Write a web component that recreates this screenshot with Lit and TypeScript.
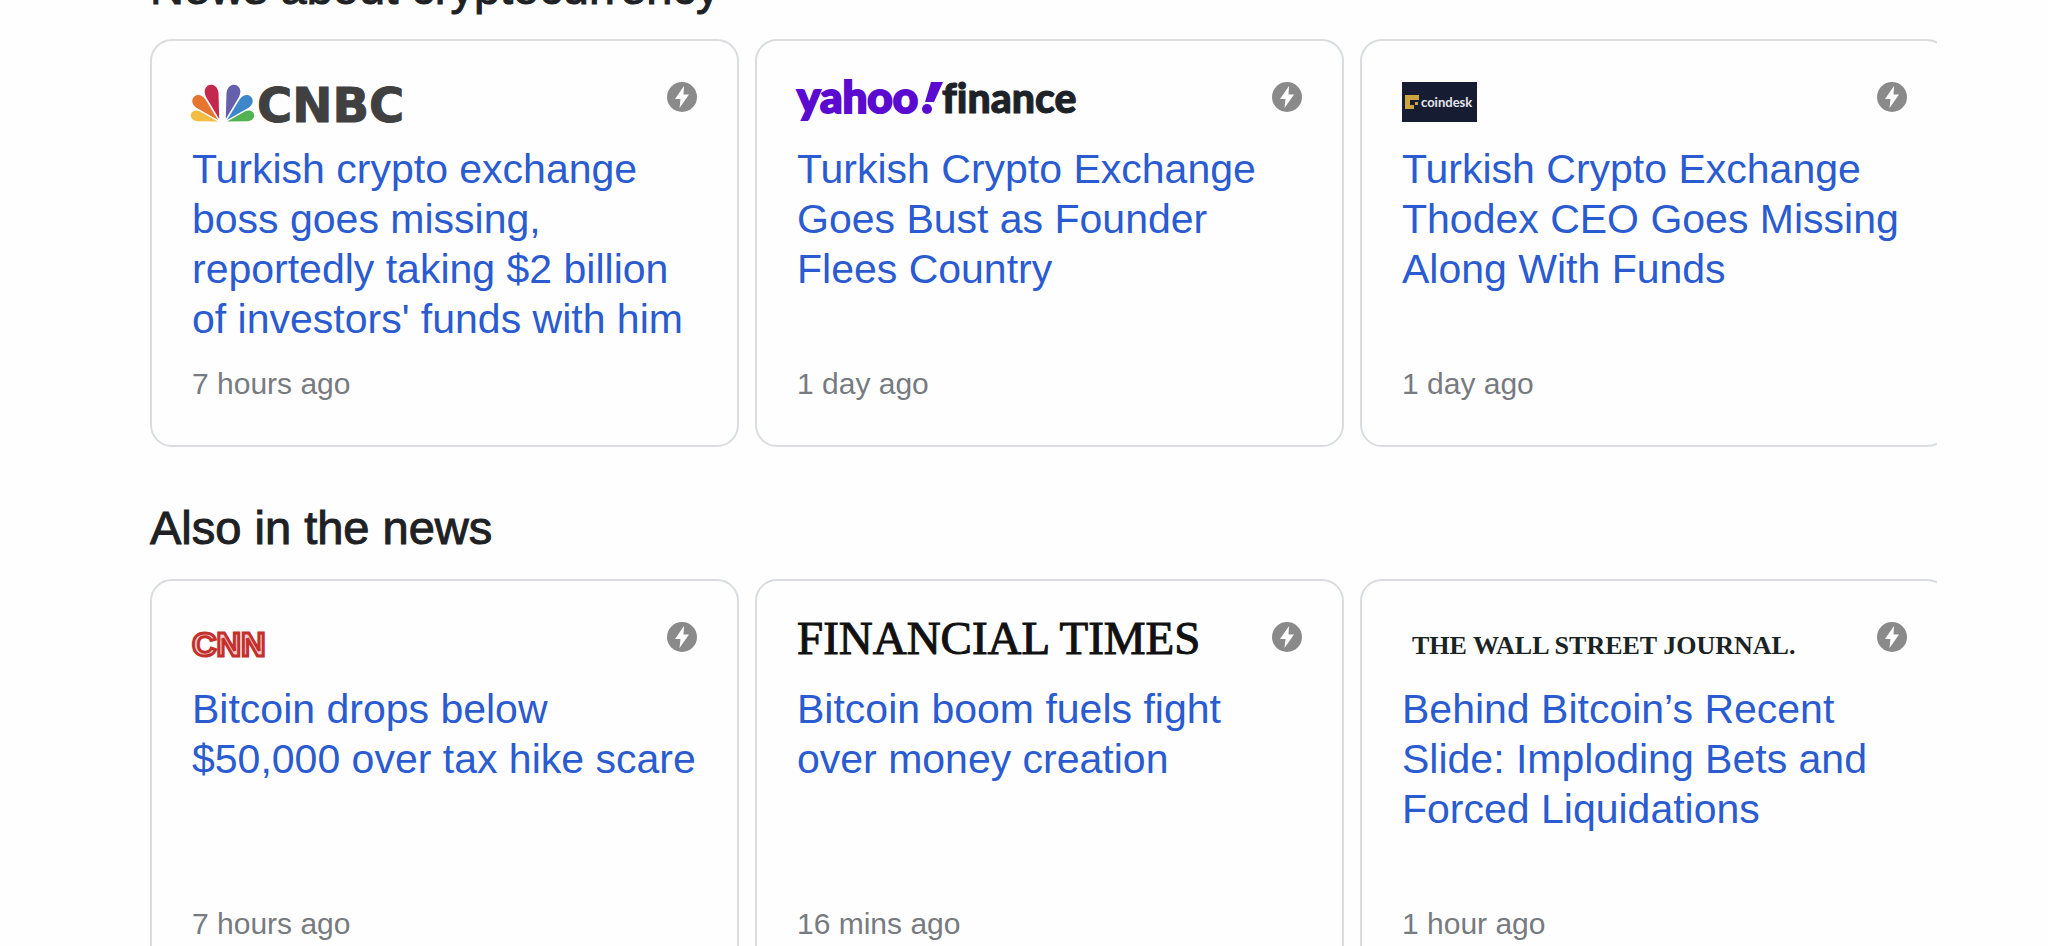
import { LitElement, html, svg, css, TemplateResult } from "lit";
import { customElement, property } from "lit/decorators.js";

interface Story {
  source: string;
  title: string;
  age: string;
}

interface Section {
  heading: string;
  stories: Story[];
}

const SECTIONS: Section[] = [
  {
    heading: "News about cryptocurrency",
    stories: [
      {
        source: "cnbc",
        title: "Turkish crypto exchange boss goes missing, reportedly taking $2 billion of investors' funds with him",
        age: "7 hours ago",
      },
      { source: "yahoo", title: "Turkish Crypto Exchange Goes Bust as Founder Flees Country", age: "1 day ago" },
      { source: "coindesk", title: "Turkish Crypto Exchange Thodex CEO Goes Missing Along With Funds", age: "1 day ago" },
    ],
  },
  {
    heading: "Also in the news",
    stories: [
      { source: "cnn", title: "Bitcoin drops below $50,000 over tax hike scare", age: "7 hours ago" },
      { source: "ft", title: "Bitcoin boom fuels fight over money creation", age: "16 mins ago" },
      { source: "wsj", title: "Behind Bitcoin’s Recent Slide: Imploding Bets and Forced Liquidations", age: "1 hour ago" },
    ],
  },
];

const FEATHERS = [
  { angle: -75, color: "#f3bd41" },
  { angle: -46, color: "#e6752f" },
  { angle: -16, color: "#c4284c" },
  { angle: 16, color: "#665fa9" },
  { angle: 46, color: "#3d86c9" },
  { angle: 75, color: "#52b153" },
];

const LOGOS: Record<string, TemplateResult> = {
  cnbc: html`<svg width="260" height="40" role="img" aria-label="CNBC">
    ${FEATHERS.map(
      (f) => svg`<path d="M0 -3 L-6.5 -28 C-9 -42 9 -42 6.5 -28 Z" fill=${f.color}
        transform="translate(${f.angle < 0 ? 28 : 33} 40) rotate(${f.angle}) scale(${Math.abs(f.angle) > 60 ? 0.78 : Math.abs(f.angle) > 30 ? 0.94 : 1})" />`
    )}
    <text class="cnbc" x="65" y="40">CNBC</text>
  </svg>`,
  yahoo: html`<svg width="300" height="40" role="img" aria-label="yahoo! finance">
    <text class="yahoo" x="0" y="31">yahoo</text>
    <path d="M134 0 H146 L137 20 H128 Z" fill="#5b0bd0" />
    <circle cx="130" cy="27" r="5" fill="#5b0bd0" />
    <text class="finance" x="145" y="31">finance</text>
  </svg>`,
  coindesk: html`<svg width="75" height="40" role="img" aria-label="coindesk">
    <rect width="75" height="40" fill="#161d33" />
    <path d="M3 13 H17 V18 H8 V23 H12 V27 H3 Z M13 20 H16 V23 H13 Z" fill="#cda53d" />
    <text class="coindesk" x="19" y="25">coindesk</text>
  </svg>`,
  cnn: html`<svg width="80" height="40" role="img" aria-label="CNN">
    <text class="cnn" x="0" y="34">CNN</text>
  </svg>`,
  ft: html`<svg width="420" height="40" role="img" aria-label="Financial Times">
    <text class="ft" x="0" y="32">FINANCIAL TIMES</text>
  </svg>`,
  wsj: html`<svg width="420" height="40" role="img" aria-label="The Wall Street Journal">
    <text class="wsj" x="10" y="32">THE WALL STREET JOURNAL.</text>
  </svg>`,
};

@customElement("news-card")
export class NewsCard extends LitElement {
  @property({ attribute: false }) story!: Story;

  static styles = css`
    :host {
      box-sizing: border-box;
      display: flex;
      flex: 0 0 589px;
      flex-direction: column;
      min-height: 408px;
      padding: 41px 40px 43px;
      border: 2px solid #dadce0;
      border-radius: 22px;
    }
    .source {
      display: flex;
      justify-content: space-between;
      align-items: flex-start;
      height: 40px;
      margin-bottom: 22px;
    }
    svg {
      display: block;
      flex: none;
      overflow: visible;
    }
    .title {
      flex: 1;
      color: #2a5bd1;
      font-size: 41px;
      line-height: 50px;
      text-decoration: none;
    }
    .age {
      color: #777b80;
      font-size: 30px;
      line-height: 36px;
    }
    .cnbc {
      font: 900 48px "DejaVu Sans", sans-serif;
      fill: #404040;
      stroke: #404040;
      stroke-width: 1px;
    }
    .yahoo {
      font: 900 44px Lato, sans-serif;
      fill: #5b0bd0;
      stroke: #5b0bd0;
      stroke-width: 2px;
    }
    .finance {
      font: 900 41px Lato, sans-serif;
      font-variant-ligatures: none;
      fill: #1d2228;
      stroke: #1d2228;
      stroke-width: 1px;
    }
    .coindesk {
      font: 700 13px Lato, sans-serif;
      fill: #e4e5ea;
    }
    .cnn {
      font: 700 34px "Liberation Sans", sans-serif;
      fill: #f3cbc9;
      stroke: #c3302e;
      stroke-width: 3px;
    }
    .ft {
      font: 47px "Liberation Serif", serif;
      fill: #111;
      stroke: #111;
      stroke-width: 1px;
    }
    .wsj {
      font: 700 26px "Liberation Serif", serif;
      fill: #1b2424;
    }
  `;

  render() {
    return html`
      <div class="source">
        ${LOGOS[this.story.source]}
        <svg width="30" height="30" viewBox="0 0 30 30" role="img" aria-label="AMP">
          <circle cx="15" cy="15" r="15" fill="#8a8a8a" />
          <path d="M17 4 L8 17 H13.5 L12.5 26 L22 12.500 H16.500 Z" fill="#fff" />
        </svg>
      </div>
      <a class="title" href="#">${this.story.title}</a>
      <div class="age">${this.story.age}</div>
    `;
  }
}

@customElement("app-root")
export class AppRoot extends LitElement {
  static styles = css`
    :host {
      display: block;
      height: 100vh;
      overflow: hidden;
      background: #fefefe;
      font-family: "Liberation Sans", Arial, sans-serif;
    }
    .feed {
      display: flex;
      flex-direction: column;
      gap: 51px;
      margin-top: -42px;
      padding: 0 111px 0 150px;
    }
    .heading {
      margin: 0 0 21px;
      color: #202124;
      font-size: 47px;
      font-weight: 400;
      line-height: 60px;
      -webkit-text-stroke: 1px #202124;
    }
    .row {
      display: flex;
      gap: 16px;
      overflow: hidden;
    }
  `;

  render() {
    return html`<main class="feed">
      ${SECTIONS.map(
        (s) => html`<section>
          <h2 class="heading">${s.heading}</h2>
          <div class="row">${s.stories.map((story) => html`<news-card .story=${story}></news-card>`)}</div>
        </section>`
      )}
    </main>`;
  }
}
